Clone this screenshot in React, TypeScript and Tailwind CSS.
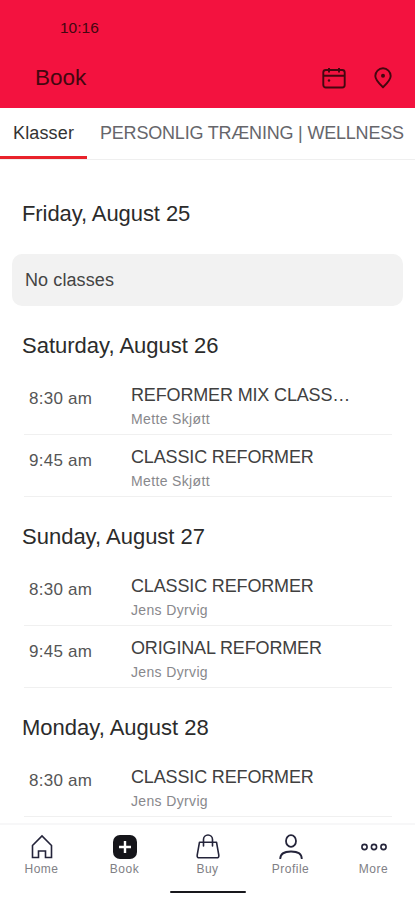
import React from 'react';

const days = [
  {
    date: 'Saturday, August 26',
    classes: [
      { time: '8:30 am', name: 'REFORMER MIX CLASS…', coach: 'Mette Skjøtt' },
      { time: '9:45 am', name: 'CLASSIC REFORMER', coach: 'Mette Skjøtt' },
    ],
  },
  {
    date: 'Sunday, August 27',
    classes: [
      { time: '8:30 am', name: 'CLASSIC REFORMER', coach: 'Jens Dyrvig' },
      { time: '9:45 am', name: 'ORIGINAL REFORMER', coach: 'Jens Dyrvig' },
    ],
  },
  {
    date: 'Monday, August 28',
    classes: [{ time: '8:30 am', name: 'CLASSIC REFORMER', coach: 'Jens Dyrvig' }],
  },
];

const iconProps = {
  width: 28,
  height: 28,
  viewBox: '0 0 28 28',
  fill: 'none',
  stroke: 'currentColor',
  strokeWidth: 1.6,
} as const;

const HomeIcon = () => (
  <svg {...iconProps}>
    <path d="M4.5 12.5 14 3l9.500 9.500V24.500h-6V18h-7v6.500h-6z" />
  </svg>
);

const BookIcon = () => (
  <svg {...iconProps} stroke="none">
    <rect x="2" y="2" width="24" height="24" rx="7" fill="#15151a" />
    <path d="M14 8v12M8 14h12" stroke="#fff" strokeWidth="2.400" />
  </svg>
);

const BuyIcon = () => (
  <svg {...iconProps}>
    <path d="M5.500 9.200h17l2.300 13q.4 2.600-2.200 2.600H5.400q-2.600 0-2.200-2.600z" strokeLinejoin="round" />
    <path d="M9.500 13V6.500a4.500 4.500 0 0 1 9 0V13" strokeLinecap="round" />
  </svg>
);

const ProfileIcon = () => (
  <svg {...iconProps} strokeWidth={1.8}>
    <ellipse cx="14" cy="8" rx="5" ry="5.800" />
    <path d="M3.200 26c0-5 4-7.500 10.800-7.500S24.800 21 24.800 26" />
  </svg>
);

const MoreIcon = () => (
  <svg {...iconProps}>
    <circle cx="4.500" cy="14" r="2.600" />
    <circle cx="14" cy="14" r="2.600" />
    <circle cx="23.500" cy="14" r="2.600" />
  </svg>
);

const navItems = [
  { label: 'Home', icon: HomeIcon },
  { label: 'Book', icon: BookIcon },
  { label: 'Buy', icon: BuyIcon },
  { label: 'Profile', icon: ProfileIcon },
  { label: 'More', icon: MoreIcon },
];

function Header() {
  return (
    <header className="h-[108px] shrink-0 bg-[#f3123f] text-[#43070f]">
      <div className="pl-[60px] pt-[18px] text-[15.500px] leading-5">10:16</div>
      <div className="mt-[26px] flex h-7 items-center pl-[35px] pr-[22px]">
        <h1 className="flex-1 text-[22.500px] leading-7">Book</h1>
        <svg className="h-6 w-6" viewBox="0 0 24 24" fill="none" stroke="currentColor" strokeWidth="1.900">
          <rect x="1.300" y="4" width="21.400" height="17.500" rx="2.500" />
          <path d="M1.300 9.800h21.400M7 2v4.500M17 2v4.500" />
          <circle cx="7" cy="14.500" r="1.200" fill="currentColor" stroke="none" />
        </svg>
        <svg className="ml-[27px] h-[22px] w-5" viewBox="0 0 20 22" fill="none" stroke="currentColor" strokeWidth="1.900">
          <path d="M10 20.200C5 15.600 2.300 12.700 2.300 9a7.700 7.700 0 0 1 15.400 0c0 3.700-2.700 6.600-7.700 11.200z" />
          <circle cx="10" cy="8.800" r="2" fill="currentColor" stroke="none" />
        </svg>
      </div>
    </header>
  );
}

function Tabs() {
  return (
    <div className="flex h-[52px] shrink-0 overflow-hidden whitespace-nowrap border-b border-[#efefef] text-[18px]">
      <div className="w-[87px] shrink-0 border-b-[3px] border-[#e9222b] pl-[13px] leading-[51px] tracking-[0.150px] text-[#333]">
        Klasser
      </div>
      <div className="pl-[13px] leading-[51px] tracking-[-0.200px] text-[#66666b]">PERSONLIG TRÆNING | WELLNESS</div>
    </div>
  );
}

export default function App() {
  return (
    <div className="flex h-[900px] w-[415px] flex-col overflow-hidden bg-white font-['Liberation_Sans',Arial,sans-serif]">
      <Header />
      <Tabs />

      <main className="h-[663px] shrink-0 overflow-hidden">
        <h2 className="pb-[26px] pl-[22px] pt-10 text-[22px] leading-7 tracking-[-0.080px] text-[#2b2b2b]">
          Friday, August 25
        </h2>
        <div className="mx-3 flex h-[52px] items-center rounded-[10px] bg-[#f2f2f2] pl-[13px] text-[18px] tracking-[0.100px] text-[#444]">
          No classes
        </div>
        {days.map((day) => (
          <section key={day.date}>
            <h2 className="pb-[13px] pl-[22px] pt-[26px] text-[22px] leading-7 text-[#2b2b2b]">{day.date}</h2>
            <div className="ml-6 mr-[23px]">
              {day.classes.map((item) => (
                <div key={item.time} className="flex h-[62px] border-b border-[#f0f0f0]">
                  <div className="w-[107px] pl-[5px] pt-4 text-[17px] leading-5 tracking-[0.250px] text-[#555]">
                    {item.time}
                  </div>
                  <div className="whitespace-nowrap pt-3">
                    <p className="text-[18px] leading-5 tracking-[-0.150px] text-[#404040]">{item.name}</p>
                    <p className="mt-1 text-[14px] leading-5 tracking-[0.350px] text-[#88888c]">{item.coach}</p>
                  </div>
                </div>
              ))}
            </div>
          </section>
        ))}
      </main>

      <nav className="flex flex-1 flex-col items-center border-t-2 border-[#f7f7f8]">
        <div className="grid w-full grid-cols-5 pt-2">
          {navItems.map((item) => (
            <div key={item.label} className="flex flex-col items-center text-[#24243a]">
              <item.icon />
              <span className="text-[12px] leading-4 tracking-[0.500px] text-[#808085]">{item.label}</span>
            </div>
          ))}
        </div>
        <div className="mt-[14px] h-[2px] w-[76px] rounded-full bg-[#18181c]" />
      </nav>
    </div>
  );
}
